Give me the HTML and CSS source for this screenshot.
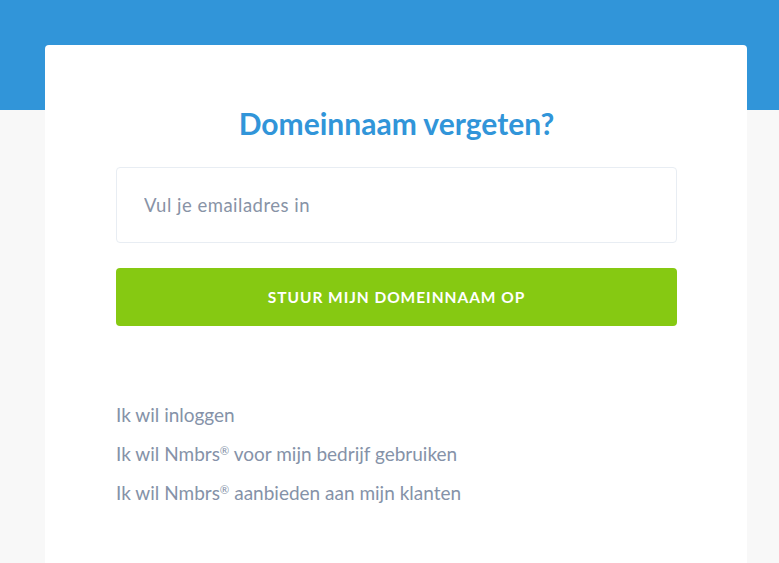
FILE: index.html
```html
<!DOCTYPE html>
<html lang="nl">
<head>
<meta charset="utf-8">
<title>Domeinnaam vergeten?</title>
<link rel="stylesheet" href="styles.css">
</head>
<body>
<div class="header"></div>
<main class="wrap">
  <section class="card">
    <h1 class="title">Domeinnaam vergeten?</h1>
    <form class="form">
      <input class="input" type="email" placeholder="Vul je emailadres in">
      <button class="btn" type="button">STUUR MIJN DOMEINNAAM OP</button>
    </form>
    <nav class="links">
      <a href="#">Ik wil inloggen</a>
      <a href="#">Ik wil Nmbrs<span class="reg">®</span> voor mijn bedrijf gebruiken</a>
      <a href="#">Ik wil Nmbrs<span class="reg">®</span> aanbieden aan mijn klanten</a>
    </nav>
  </section>
</main>
</body>
</html>
```
FILE: styles.css
```css
* { box-sizing: border-box; }
html, body { margin: 0; padding: 0; }
body {
  background: #f8f8f8;
  font-family: Lato, "Open Sans", sans-serif;
  height: 563px;
  overflow: hidden;
}
.header {
  background: #3195d9;
  height: 110px;
}
.wrap {
  margin-top: -65px;
  padding: 0 32px 0 45px;
}
.card {
  background: #fff;
  border-radius: 4px 4px 0 0;
  width: 702px;
  height: 518px;
  padding: 59px 70px 0 71px;
}
.title {
  margin: 0;
  text-align: center;
  color: #3195d9;
  font-size: 30px;
  font-weight: 700;
  line-height: 38px;
}
.form {
  margin-top: 25px;
  display: flex;
  flex-direction: column;
  gap: 25px;
}
.input {
  height: 76px;
  border: 1px solid #e8edf3;
  border-radius: 4px;
  padding: 0 27px;
  font-family: inherit;
  font-size: 18.5px;
  letter-spacing: 0.5px;
  color: #5a6577;
  outline: none;
}
.input::placeholder { color: #8893a6; }
.btn {
  height: 58px;
  border: 0;
  border-radius: 4px;
  background: #86c912;
  color: #fff;
  font-family: inherit;
  font-weight: 700;
  font-size: 15.5px;
  letter-spacing: 0.95px;
}
.links {
  margin-top: 75px;
  display: flex;
  flex-direction: column;
  gap: 12px;
}
.links a {
  color: #8592a8;
  text-decoration: none;
  font-size: 19px;
  line-height: 27px;
}
.reg {
  font-size: 0.6em;
  vertical-align: 0.55em;
  line-height: 0;
}
```
